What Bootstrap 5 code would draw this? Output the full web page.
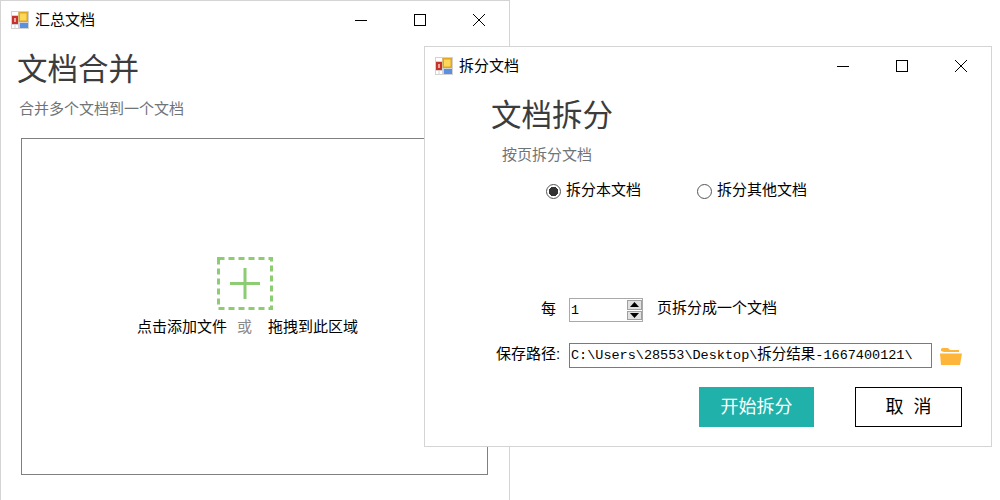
<!DOCTYPE html>
<html lang="zh-CN">

<head>
    <meta charset="UTF-8">
    <meta name="viewport" content="width=device-width, initial-scale=1.0">
    <title>文档合并与拆分</title>
    <link href="https://cdn.jsdelivr.net/npm/bootstrap@5.3.0/dist/css/bootstrap.min.css" rel="stylesheet">
    <style>
        html, body {
            height: 100%;
            overflow: hidden;
        }

        body {
            background: #fff;
            color: #000;
            font-family: "Liberation Sans", "Noto Sans CJK SC", sans-serif;
            font-size: 15px;
        }

        .win {
            position: absolute;
            background: #fff;
            border: 1px solid #d4d4d4;
        }

        .win-merge {
            left: 0;
            top: 0;
            width: 510px;
            height: 520px;
        }

        .win-split {
            left: 424px;
            top: 46px;
            width: 568px;
            height: 401px;
        }

        .title-row {
            height: 37px;
            padding: 0 1px 0 10px;
            line-height: 20px;
        }

        .title-row .app-icon {
            margin-right: 6px;
        }

        .title-text {
            flex: 1;
        }

        .ctl {
            width: 59px;
            height: 37px;
        }

        .win-h {
            font-size: 30.5px;
            font-weight: 400;
            line-height: 40px;
            color: #3c3c3c;
            margin: 0;
        }

        .win-sub {
            line-height: 20px;
            color: #6f7479;
        }

        .merge-h {
            margin: 11px 0 0 16px;
        }

        .merge-sub {
            margin: 10px 0 0 18px;
        }

        .drop-box {
            width: 467px;
            height: 337px;
            margin: 19px 0 0 20px;
            border: 1px solid #808080;
            padding-top: 118px;
        }

        .drop-plus {
            margin-left: 195px;
            display: block;
        }

        .drop-text {
            line-height: 20px;
            margin-top: 7px;
            padding-left: 115px;
        }

        .drop-or {
            color: #8a8a8a;
            margin: 0 16px 0 10px;
        }

        .split-h {
            margin: 11px 0 0 66px;
        }

        .split-sub {
            margin: 10px 0 0 77px;
        }

        .radio-row {
            height: 20px;
            margin: 16px 0 0 121px;
            gap: 56px;
        }

        .radio-row .form-check {
            min-height: 0;
            margin: 0;
            padding: 0;
        }

        .radio-row .form-check-input {
            float: none;
            flex: none;
            width: 15px;
            height: 15px;
            margin: 0 5px 0 0;
            border-color: #555;
            background-color: #fff;
        }

        .radio-row .form-check-input:checked {
            background-color: #fff;
            border-color: #555;
            background-image: radial-gradient(circle, #333 0, #333 4.5px, transparent 5px);
        }

        .radio-row .form-check-label {
            line-height: 20px;
            padding-bottom: 2px;
        }

        .spin-row {
            height: 24px;
            margin-top: 97px;
        }

        .each-label {
            margin-left: 116px;
            width: 28px;
            padding-bottom: 2px;
        }

        .spin-box {
            width: 74px;
            height: 24px;
            border: 1px solid #a9a9a9;
            padding-left: 1px;
        }

        .spin-box input {
            width: 56px;
            border: 0;
            padding: 0;
            outline: 0;
            font: 13.33px "Liberation Mono", monospace;
        }

        .spin-btns {
            width: 15px;
            gap: 1px;
            margin: 1px 0 1px auto;
        }

        .spin-btn {
            flex: 1;
            background: #e1e1e1;
            border: 1px solid #a0a0a0;
            line-height: 0;
        }

        .spin-after {
            margin-left: 14px;
            padding-bottom: 4px;
        }

        .path-row {
            height: 25px;
            margin-top: 21px;
        }

        .path-label {
            margin-left: 71px;
            width: 73px;
            padding-bottom: 3px;
        }

        .path-box {
            width: 363px;
            height: 25px;
            border: 1px solid #7a7a7a;
            padding-left: 1px;
            font: 13.5px/18px "Liberation Mono", "Noto Sans CJK SC", monospace;
            white-space: nowrap;
            overflow: hidden;
        }

        .path-box span {
            font-family: "Noto Sans CJK SC", sans-serif;
            font-size: 14.5px;
        }

        .folder-icon {
            margin-left: 8px;
        }

        .btn-row {
            margin: 19px 0 0 274px;
            gap: 41px;
        }

        .btn-start, .btn-start:hover {
            width: 115px;
            height: 40px;
            padding: 0;
            border: 0;
            border-radius: 0;
            background: #20b2aa;
            color: #fff;
            font-size: 18px;
        }

        .btn-cancel, .btn-cancel:hover {
            width: 107px;
            height: 40px;
            padding: 0;
            border: 1px solid #000;
            border-radius: 0;
            background: #fff;
            color: #000;
            font-size: 18px;
        }
    </style>
</head>

<body>
    <!-- left window -->
    <div class="win win-merge">
        <div class="title-row d-flex align-items-center">
            <svg class="app-icon" width="18" height="18" viewBox="0 0 18 18">
                <rect width="18" height="18" fill="#d2d2d2" />
                <rect x="1" y="1" width="6" height="3" fill="#fff" />
                <rect x="1" y="14" width="2.5" height="3" fill="#fff" />
                <rect x="4.5" y="14" width="2.5" height="3" fill="#fff" />
                <rect x="1" y="5" width="6" height="8" fill="#c8322c" />
                <rect x="3" y="7" width="2" height="4" fill="#e8a8a0" />
                <rect x="7.5" y="1" width="9.500" height="10" fill="#e2a520" />
                <rect x="9" y="2.500" width="6.500" height="7" fill="#fbd75a" />
                <rect x="9" y="12" width="8" height="5" fill="#5b8fe0" />
            </svg>
            <span class="title-text">汇总文档</span>
            <div class="ctl d-flex align-items-center justify-content-center">
                <svg width="12" height="12"><path d="M0 6.5H12" stroke="#000" /></svg>
            </div>
            <div class="ctl d-flex align-items-center justify-content-center">
                <svg width="12" height="12"><rect x=".5" y=".5" width="11" height="11" fill="none" stroke="#000" /></svg>
            </div>
            <div class="ctl d-flex align-items-center justify-content-center">
                <svg width="12" height="12"><path d="M0 0L12 12M12 0L0 12" stroke="#000" /></svg>
            </div>
        </div>
        <h1 class="win-h merge-h">文档合并</h1>
        <div class="win-sub merge-sub">合并多个文档到一个文档</div>
        <div class="drop-box">
            <svg class="drop-plus" width="56" height="53" viewBox="0 0 56 53">
                <rect x="1.5" y="1.5" width="53" height="50" fill="none" stroke="#8ccc73" stroke-width="3" stroke-dasharray="6 4" />
                <path d="M28 11V42M13 26.5H43" stroke="#8ccc73" stroke-width="3" fill="none" />
            </svg>
            <div class="drop-text"><span>点击添加文件</span><span class="drop-or">或</span><span>拖拽到此区域</span></div>
        </div>
    </div>

    <!-- right window -->
    <div class="win win-split">
        <div class="title-row d-flex align-items-center">
            <svg class="app-icon" width="18" height="18" viewBox="0 0 18 18">
                <rect width="18" height="18" fill="#d2d2d2" />
                <rect x="1" y="1" width="6" height="3" fill="#fff" />
                <rect x="1" y="14" width="2.5" height="3" fill="#fff" />
                <rect x="4.5" y="14" width="2.5" height="3" fill="#fff" />
                <rect x="1" y="5" width="6" height="8" fill="#c8322c" />
                <rect x="3" y="7" width="2" height="4" fill="#e8a8a0" />
                <rect x="7.5" y="1" width="9.500" height="10" fill="#e2a520" />
                <rect x="9" y="2.500" width="6.500" height="7" fill="#fbd75a" />
                <rect x="9" y="12" width="8" height="5" fill="#5b8fe0" />
            </svg>
            <span class="title-text">拆分文档</span>
            <div class="ctl d-flex align-items-center justify-content-center">
                <svg width="12" height="12"><path d="M0 6.5H12" stroke="#000" /></svg>
            </div>
            <div class="ctl d-flex align-items-center justify-content-center">
                <svg width="12" height="12"><rect x=".5" y=".5" width="11" height="11" fill="none" stroke="#000" /></svg>
            </div>
            <div class="ctl d-flex align-items-center justify-content-center">
                <svg width="12" height="12"><path d="M0 0L12 12M12 0L0 12" stroke="#000" /></svg>
            </div>
        </div>
        <h1 class="win-h split-h">文档拆分</h1>
        <div class="win-sub split-sub">按页拆分文档</div>
        <div class="radio-row d-flex">
            <div class="form-check d-flex align-items-center">
                <input class="form-check-input" type="radio" name="mode" id="modeSelf" checked>
                <label class="form-check-label" for="modeSelf">拆分本文档</label>
            </div>
            <div class="form-check d-flex align-items-center">
                <input class="form-check-input" type="radio" name="mode" id="modeOther">
                <label class="form-check-label" for="modeOther">拆分其他文档</label>
            </div>
        </div>
        <div class="spin-row d-flex align-items-center">
            <span class="each-label">每</span>
            <div class="spin-box d-flex align-items-center">
                <input type="text" value="1">
                <div class="spin-btns d-flex flex-column align-self-stretch">
                    <div class="spin-btn d-flex align-items-center justify-content-center">
                        <svg width="9" height="5"><path d="M4.5 0L9 5H0Z" fill="#000" /></svg>
                    </div>
                    <div class="spin-btn d-flex align-items-center justify-content-center">
                        <svg width="9" height="5"><path d="M0 0H9L4.5 5Z" fill="#000" /></svg>
                    </div>
                </div>
            </div>
            <span class="spin-after">页拆分成一个文档</span>
        </div>
        <div class="path-row d-flex align-items-center">
            <span class="path-label">保存路径:</span>
            <div class="path-box">C:\Users\28553\Desktop\<span>拆分结果</span>-1667400121\</div>
            <svg class="folder-icon" width="22" height="18" viewBox="0 0 22 18">
                <path d="M1 4V2.5Q1 1 2.500 1H8L10 3H19V5H4Z" fill="#fdb63a" />
                <path d="M0 6.500H22L20 18H1Z" fill="#fdb63a" />
            </svg>
        </div>
        <div class="btn-row d-flex">
            <button type="button" class="btn btn-start">开始拆分</button>
            <button type="button" class="btn btn-cancel">取&nbsp;&nbsp;消</button>
        </div>
    </div>

    <script src="https://cdn.jsdelivr.net/npm/bootstrap@5.3.0/dist/js/bootstrap.bundle.min.js"></script>
</body>

</html>
